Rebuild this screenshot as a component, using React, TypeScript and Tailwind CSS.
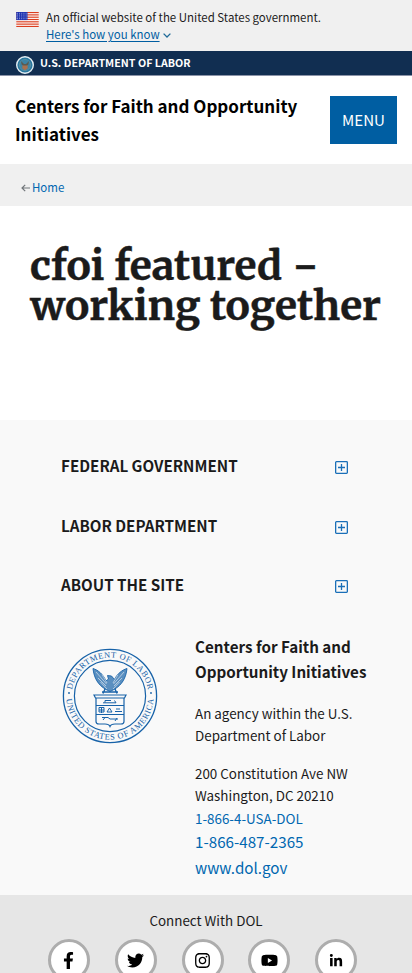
import { FaFacebookF, FaInstagram, FaLinkedinIn, FaTwitter, FaYoutube } from 'react-icons/fa';

const sections = ['FEDERAL GOVERNMENT', 'LABOR DEPARTMENT', 'ABOUT THE SITE'];

const social = [
  { name: 'Facebook', icon: <FaFacebookF size={17} /> },
  { name: 'Twitter', icon: <FaTwitter size={17} /> },
  { name: 'Instagram', icon: <FaInstagram size={17} /> },
  { name: 'YouTube', icon: <FaYoutube size={17} /> },
  { name: 'LinkedIn', icon: <FaLinkedinIn size={14} className="mt-0.5" /> },
];

function Flag() {
  return (
    <svg viewBox="0 0 24 16" className="mt-3 h-[15px] w-[23px] shrink-0" aria-hidden="true">
      <rect width="24" height="16" fill="#fff" />
      {[0, 1, 2, 3, 4, 5, 6].map((i) => (
        <rect key={i} y={i * 2.46} width="24" height="1.25" fill="#db3e1f" />
      ))}
      <rect width="12" height="8.6" fill="#1e33b1" />
      {[1.2, 3.2, 5.2, 7.2].map((y) =>
        [1.3, 3.6, 5.9, 8.2, 10.5].map((x) => <circle key={`${x}-${y}`} cx={x} cy={y} r="0.5" fill="#fff" />),
      )}
    </svg>
  );
}

function SmallSeal() {
  return (
    <svg viewBox="0 0 18 18" className="mt-[5px] size-[18px]" aria-hidden="true">
      <circle cx="9" cy="9" r="8.3" fill="#2878a0" stroke="#e3edf3" strokeWidth="1.4" />
      <circle cx="9" cy="9" r="5.6" fill="#3b83a6" stroke="#6f95a0" strokeWidth="0.6" />
      <path d="M5 5l3 3h2l3-3-.6 3.500L10.500 10h-3L5.600 8.500Z" fill="#5b5a50" />
      <path d="M6.300 9.500h5.400v3L9 14.200l-2.700-1.700Z" fill="#a8714f" />
    </svg>
  );
}

function Seal() {
  return (
    <svg viewBox="0 0 96 96" className="size-24" fill="none" stroke="#1762a8" aria-label="Department of Labor seal">
      <defs>
        <path id="arcTop" d="M9.6 48A38.4 38.4 0 0 1 86.4 48" />
        <path id="arcBottom" d="M4.3 48A43.7 43.7 0 0 0 91.7 48" />
      </defs>
      <circle cx="48" cy="48" r="46.6" strokeWidth="1.3" />
      <circle cx="48" cy="48" r="35.6" strokeWidth="1.2" />
      <g fill="#1762a8" stroke="none" className="font-['Liberation_Serif',serif] text-[8.4px]">
        <text textAnchor="middle" textLength="108" lengthAdjust="spacing">
          <textPath href="#arcTop" startOffset="50%">DEPARTMENT OF LABOR</textPath>
        </text>
        <text textAnchor="middle" textLength="131" lengthAdjust="spacing">
          <textPath href="#arcBottom" startOffset="50%">UNITED STATES OF AMERICA</textPath>
        </text>
        <circle cx="7" cy="45" r="0.9" />
        <circle cx="89" cy="45" r="0.9" />
      </g>
      <path
        d="M31 20.500C32 30 36 37 44 41.500L48 43.500 52 41.500C60 37 64 30 65 20.500 60 22 55 26 52.500 31.500L49.500 28 45.500 27.500 46.500 31 44 33C41 26 36 22 31 20.500Z"
        fill="#1762a8"
        fillOpacity="0.7"
        strokeWidth="0.9"
      />
      <path
        d="M34 24 44.500 36M36 30 44 38M38.500 34 45 41M62 24 51.500 36M60 30 52 38M57.500 34 51 41M40 26.500 45 35M56 26.500 51 35"
        stroke="#f9f9f9"
        strokeWidth="0.55"
      />
      <path d="M40 44H56M43 41 41 45.500M53 41 55 45.500" strokeWidth="1.4" />
      <path d="M32 47H64L62.500 50H33.500Z" strokeWidth="1.2" />
      <path
        d="M34 50V73.500Q34 76 37 76H43Q47 76 48 78.500 49 76 53 76H59Q62 76 62 73.500V50M34 57.500H62M34 66.500H62"
        strokeWidth="1.2"
      />
      <path
        d="M41 54.800H54L52.500 52.500M43 54.500V52.500H49M37 59.500H42V64H37ZM39.500 59V65M37 62H42M45 64 47.500 60 50 64H45M53 63.500H60M54 61H58M40 69.500H46L48 71H56M41 72 43 69.500M53 73 55 70"
        strokeWidth="1"
      />
    </svg>
  );
}

function PlusBox() {
  return (
    <svg viewBox="0 0 13 13" className="mt-1 size-[13px]" fill="none" stroke="#1a6fb8" strokeWidth="1.3" aria-hidden="true">
      <rect x="0.65" y="0.65" width="11.7" height="11.7" rx="0.8" />
      <path d="M6.500 3v7M3 6.500h7" />
    </svg>
  );
}

export default function App() {
  return (
    <div className="h-[973px] w-full overflow-hidden bg-white font-['Noto_Sans_CJK_SC',sans-serif] text-[#1b1b1b]">
      <section className="flex h-[51px] bg-[#f0f0f0] pl-4">
        <Flag />
        <div className="ml-[7px] pt-[9px] text-[11.46px] leading-[17px]">
          <p>An official website of the United States government.</p>
          <a className="flex items-center text-[#005ea2]">
            <span className="underline underline-offset-2">Here's how you know</span>
            <svg viewBox="0 0 8 5" className="mt-0.5 ml-[3px] h-[5px] w-2" fill="none" stroke="#1f6a98" strokeWidth="1.3">
              <path d="m.6.6 3.4 3.400L7.400.6" />
            </svg>
          </a>
        </div>
      </section>
      <div className="flex h-[25px] border-b border-[#8b93a8] bg-[#112e51] pl-4 text-[10.7px] font-bold leading-6 text-white">
        <SmallSeal />
        <span className="ml-1.5">U.S. DEPARTMENT OF LABOR</span>
      </div>
      <header className="flex h-[88px] items-start justify-between px-[15px] pt-4">
        <h2 className="text-[17px] font-bold leading-7 text-black">
          Centers for Faith and Opportunity
          <br />
          Initiatives
        </h2>
        <button className="mt-1 h-12 w-[67px] bg-[#005ea2] text-[15.1px] leading-none text-white">MENU</button>
      </header>
      <nav className="flex h-[42px] items-center bg-[#f0f0f0] pl-[21px] text-[11.5px] text-[#0067b0]">
        <svg viewBox="0 0 9 8" className="mt-1.5 mr-0.5 h-2 w-[9px]" fill="none" stroke="#71767a" strokeWidth="1.2">
          <path d="M9 4H1M4.200.8 1 4l3.200 3.200" />
        </svg>
        <a className="mt-1.5">Home</a>
      </nav>
      <main className="h-[214px] px-[30px] pt-10">
        <h1 className="font-['Merriweather','Noto_Serif','DejaVu_Serif_Condensed',serif] text-[40.7px] font-bold leading-10 whitespace-nowrap [-webkit-text-stroke:0.4px_#1b1b1b]">
          cfoi featured <span className="inline-block origin-left scale-x-115">-</span>
          <br />
          working together
        </h1>
      </main>
      <footer>
        <div className="h-[475px] bg-[#f9f9f9] pt-4">
          {sections.map((s) => (
            <div key={s} className="flex h-[59.4px] items-center justify-between pr-16 pl-[61px] text-[15.2px] font-bold">
              <span>{s}</span>
              <PlusBox />
            </div>
          ))}
          <div className="flex pt-5 pl-[62px]">
            <div className="w-[133px] pt-3.5">
              <Seal />
            </div>
            <div className="whitespace-nowrap">
              <h3 className="text-[15.2px] font-bold leading-[25px]">
                Centers for Faith and
                <br />
                Opportunity Initiatives
              </h3>
              <p className="mt-[18px] text-[13.4px] leading-[22px]">
                An agency within the U.S.
                <br />
                Department of Labor
              </p>
              <p className="mt-4 text-[13.4px] leading-[22px]">
                200 Constitution Ave NW
                <br />
                Washington, DC 20210
              </p>
              <div className="text-[15.2px] text-[#0067b0]">
                <a className="block text-[13.4px] leading-6">1-866-4-USA-DOL</a>
                <a className="block leading-[23px]">1-866-487-2365</a>
                <a className="block leading-7">www.dol.gov</a>
              </div>
            </div>
          </div>
        </div>
        <div className="h-[78px] bg-[#e6e6e6] pt-3.5">
          <p className="text-center text-[13.4px] leading-[22px]">Connect With DOL</p>
          <div className="mt-2 flex justify-center gap-[24.8px] pr-[7px]">
            {social.map((s) => (
              <a
                key={s.name}
                aria-label={s.name}
                className="flex size-[42px] shrink-0 items-center justify-center rounded-full border-[3px] border-[#adadad] bg-white text-black"
              >
                {s.icon}
              </a>
            ))}
          </div>
        </div>
      </footer>
    </div>
  );
}
